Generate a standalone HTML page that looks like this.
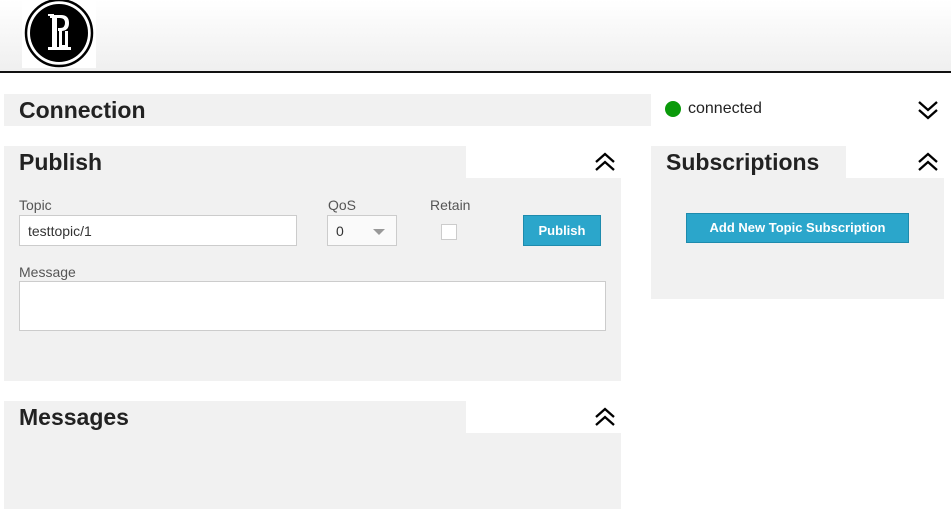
<!DOCTYPE html>
<html><head><meta charset="utf-8"><style>
*{margin:0;padding:0;box-sizing:border-box}
body{width:951px;height:513px;overflow:hidden;background:#fff;font-family:"Liberation Sans",Arial,sans-serif;position:relative;color:#222}
.a{position:absolute}
.hdr{left:0;top:0;width:951px;height:71px;background:linear-gradient(#fff,#efefef)}
.line{left:0;top:71px;width:951px;height:2px;background:#111}
.g{background:#f1f1f1}
.t{font-weight:bold;font-size:23px;color:#222}
.lbl{font-size:14px;color:#555}
.in{background:#fff;border:1px solid #ccc}
.btn{background:#2ba6cb;border:1px solid #1e8bad;color:#fff;font-weight:bold;font-size:13px;text-align:center}
</style></head><body>
<div class="a hdr"></div>
<div class="a line"></div>
<div class="a" style="left:22px;top:0;width:74px;height:68px;background:#fff"></div>
<svg class="a" style="left:22px;top:0" width="74" height="68" viewBox="0 0 74 68">
<circle cx="37" cy="33" r="33" fill="none" stroke="#000" stroke-width="2.5"/>
<circle cx="37" cy="33" r="29" fill="#000"/>
<path d="M28 15h11q8 0 8 8t-8 8h-3v-3h2q5 0 5-5t-5-5h-10zM30 18h5v29h-5zM37 31h3v14h3v-14h3v16h-9zM26 47h23v3h-23zM26 14h6v2h-6z" fill="#fff"/>
</svg>
<div class="a g" style="left:4px;top:94px;width:647px;height:32px"></div>
<div class="a t" style="left:19px;top:97px">Connection</div>
<div class="a" style="left:665px;top:101px;width:16px;height:16px;border-radius:50%;background:#0a9a0a"></div>
<div class="a" style="left:688px;top:100px;font-size:16px;color:#222">connected</div>
<svg class="a" style="left:917px;top:99px" width="22" height="22" viewBox="0 0 22 22" fill="none" stroke="#000" stroke-width="2.3"><path d="M2 3l9 8 9-8M2 11l9 8 9-8"/></svg>

<div class="a g" style="left:4px;top:146px;width:462px;height:32px"></div>
<div class="a g" style="left:4px;top:178px;width:617px;height:203px"></div>
<div class="a t" style="left:19px;top:149px">Publish</div>
<svg class="a" style="left:594px;top:151px" width="22" height="22" viewBox="0 0 22 22" fill="none" stroke="#000" stroke-width="2.3"><path d="M2 11l9-8 9 8M2 19l9-8 9 8"/></svg>
<div class="a lbl" style="left:19px;top:197px">Topic</div>
<div class="a in" style="left:19px;top:215px;width:278px;height:31px;font-size:14px;color:#333;padding:7px 0 0 8px">testtopic/1</div>
<div class="a lbl" style="left:328px;top:197px">QoS</div>
<div class="a in" style="left:327px;top:215px;width:70px;height:31px;font-size:14px;color:#333;padding:7px 0 0 8px;background:#fafafa">0</div>
<div class="a" style="left:373px;top:229px;width:0;height:0;border-left:6px solid transparent;border-right:6px solid transparent;border-top:6px solid #999"></div>
<div class="a lbl" style="left:430px;top:197px">Retain</div>
<div class="a in" style="left:441px;top:224px;width:16px;height:16px"></div>
<div class="a btn" style="left:523px;top:215px;width:78px;height:31px;line-height:29px">Publish</div>
<div class="a lbl" style="left:19px;top:264px">Message</div>
<div class="a in" style="left:19px;top:281px;width:587px;height:50px"></div>

<div class="a g" style="left:651px;top:146px;width:195px;height:32px"></div>
<div class="a g" style="left:651px;top:178px;width:293px;height:121px"></div>
<div class="a t" style="left:666px;top:149px">Subscriptions</div>
<svg class="a" style="left:917px;top:151px" width="22" height="22" viewBox="0 0 22 22" fill="none" stroke="#000" stroke-width="2.3"><path d="M2 11l9-8 9 8M2 19l9-8 9 8"/></svg>
<div class="a btn" style="left:686px;top:213px;width:223px;height:30px;line-height:28px">Add New Topic Subscription</div>

<div class="a g" style="left:4px;top:401px;width:462px;height:32px"></div>
<div class="a g" style="left:4px;top:433px;width:617px;height:76px"></div>
<div class="a t" style="left:19px;top:404px">Messages</div>
<svg class="a" style="left:594px;top:406px" width="22" height="22" viewBox="0 0 22 22" fill="none" stroke="#000" stroke-width="2.3"><path d="M2 11l9-8 9 8M2 19l9-8 9 8"/></svg>
</body></html>
